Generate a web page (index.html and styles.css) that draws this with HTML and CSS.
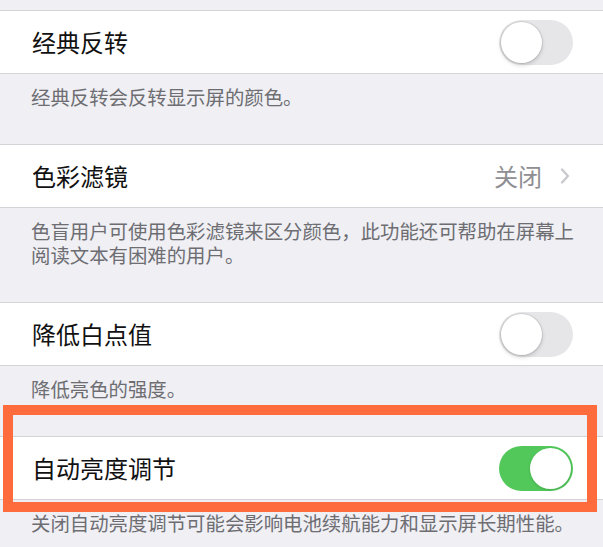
FILE: index.html
```html
<!DOCTYPE html>
<html lang="zh-CN">
<head>
  <meta charset="UTF-8" />
  <meta name="viewport" content="width=device-width, initial-scale=1.0" />
  <title>显示调节</title>
  <link rel="stylesheet" href="styles.css">
</head>
<body>
  <div class="settings">
    <section class="group">
      <div class="row">
        <span class="label">经典反转</span>
        <span class="switch"></span>
      </div>
      <p class="note">经典反转会反转显示屏的颜色。</p>
    </section>

    <section class="group">
      <div class="row">
        <span class="label">色彩滤镜</span>
        <span class="detail">关闭
          <svg class="chevron" width="10" height="16" viewBox="0 0 10 16">
            <path d="M2 1.5 L8 8 L2 14.5" fill="none" stroke="#c7c7cc" stroke-width="2.2" stroke-linecap="round" stroke-linejoin="round" />
          </svg>
        </span>
      </div>
      <p class="note">色盲用户可使用色彩滤镜来区分颜色，此功能还可帮助在屏幕上阅读文本有困难的用户。</p>
    </section>

    <section class="group">
      <div class="row">
        <span class="label">降低白点值</span>
        <span class="switch"></span>
      </div>
      <p class="note">降低亮色的强度。</p>
    </section>

    <section class="group">
      <div class="row marked">
        <span class="label">自动亮度调节</span>
        <span class="switch on"></span>
        <!-- orange highlight drawn over the row -->
        <span class="highlight"></span>
      </div>
      <p class="note">关闭自动亮度调节可能会影响电池续航能力和显示屏长期性能。</p>
    </section>
  </div>
</body>
</html>
```

FILE: styles.css
```css
* {
  margin: 0;
  padding: 0;
  box-sizing: border-box;
}

body {
  background: #efeff4;
  font-family: "Noto Sans CJK SC", "Noto Sans", sans-serif;
  overflow: hidden;
}

.settings {
  padding-top: 10px;
}

.row {
  height: 64px;
  background: #fff;
  border-top: 1px solid #d4d4d8;
  border-bottom: 1px solid #d4d4d8;
  display: flex;
  align-items: center;
  justify-content: space-between;
  padding: 0 30px 0 32px;
}

.label {
  font-size: 24px;
  color: #111;
  line-height: 1;
}

.note {
  font-size: 19.4px;
  line-height: 24px;
  color: #6d6d72;
  padding: 11px 12px 35px 31px;
}

.detail {
  display: flex;
  align-items: center;
  gap: 18px;
  font-size: 24px;
  color: #8e8e93;
  line-height: 1;
  padding-right: 3px;
}

.switch {
  position: relative;
  width: 74px;
  height: 45px;
  border-radius: 23px;
  background: #e6e6e9;
  flex-shrink: 0;
}

.switch::after {
  content: "";
  position: absolute;
  top: 2px;
  left: 2px;
  width: 41px;
  height: 41px;
  border-radius: 50%;
  background: #fff;
  box-shadow: 0 0 0 1px rgba(0, 0, 0, 0.08), 0 2px 4px rgba(0, 0, 0, 0.18);
}

.switch.on {
  background: #52c85b;
}

.switch.on::after {
  left: 31px;
  box-shadow: 0 1px 3px rgba(0, 0, 0, 0.15);
}

.marked {
  position: relative;
}

.highlight {
  position: absolute;
  top: -32px;
  bottom: -13px;
  left: 3px;
  right: 6px;
  border: 10px solid #fe6b3c;
}
```
